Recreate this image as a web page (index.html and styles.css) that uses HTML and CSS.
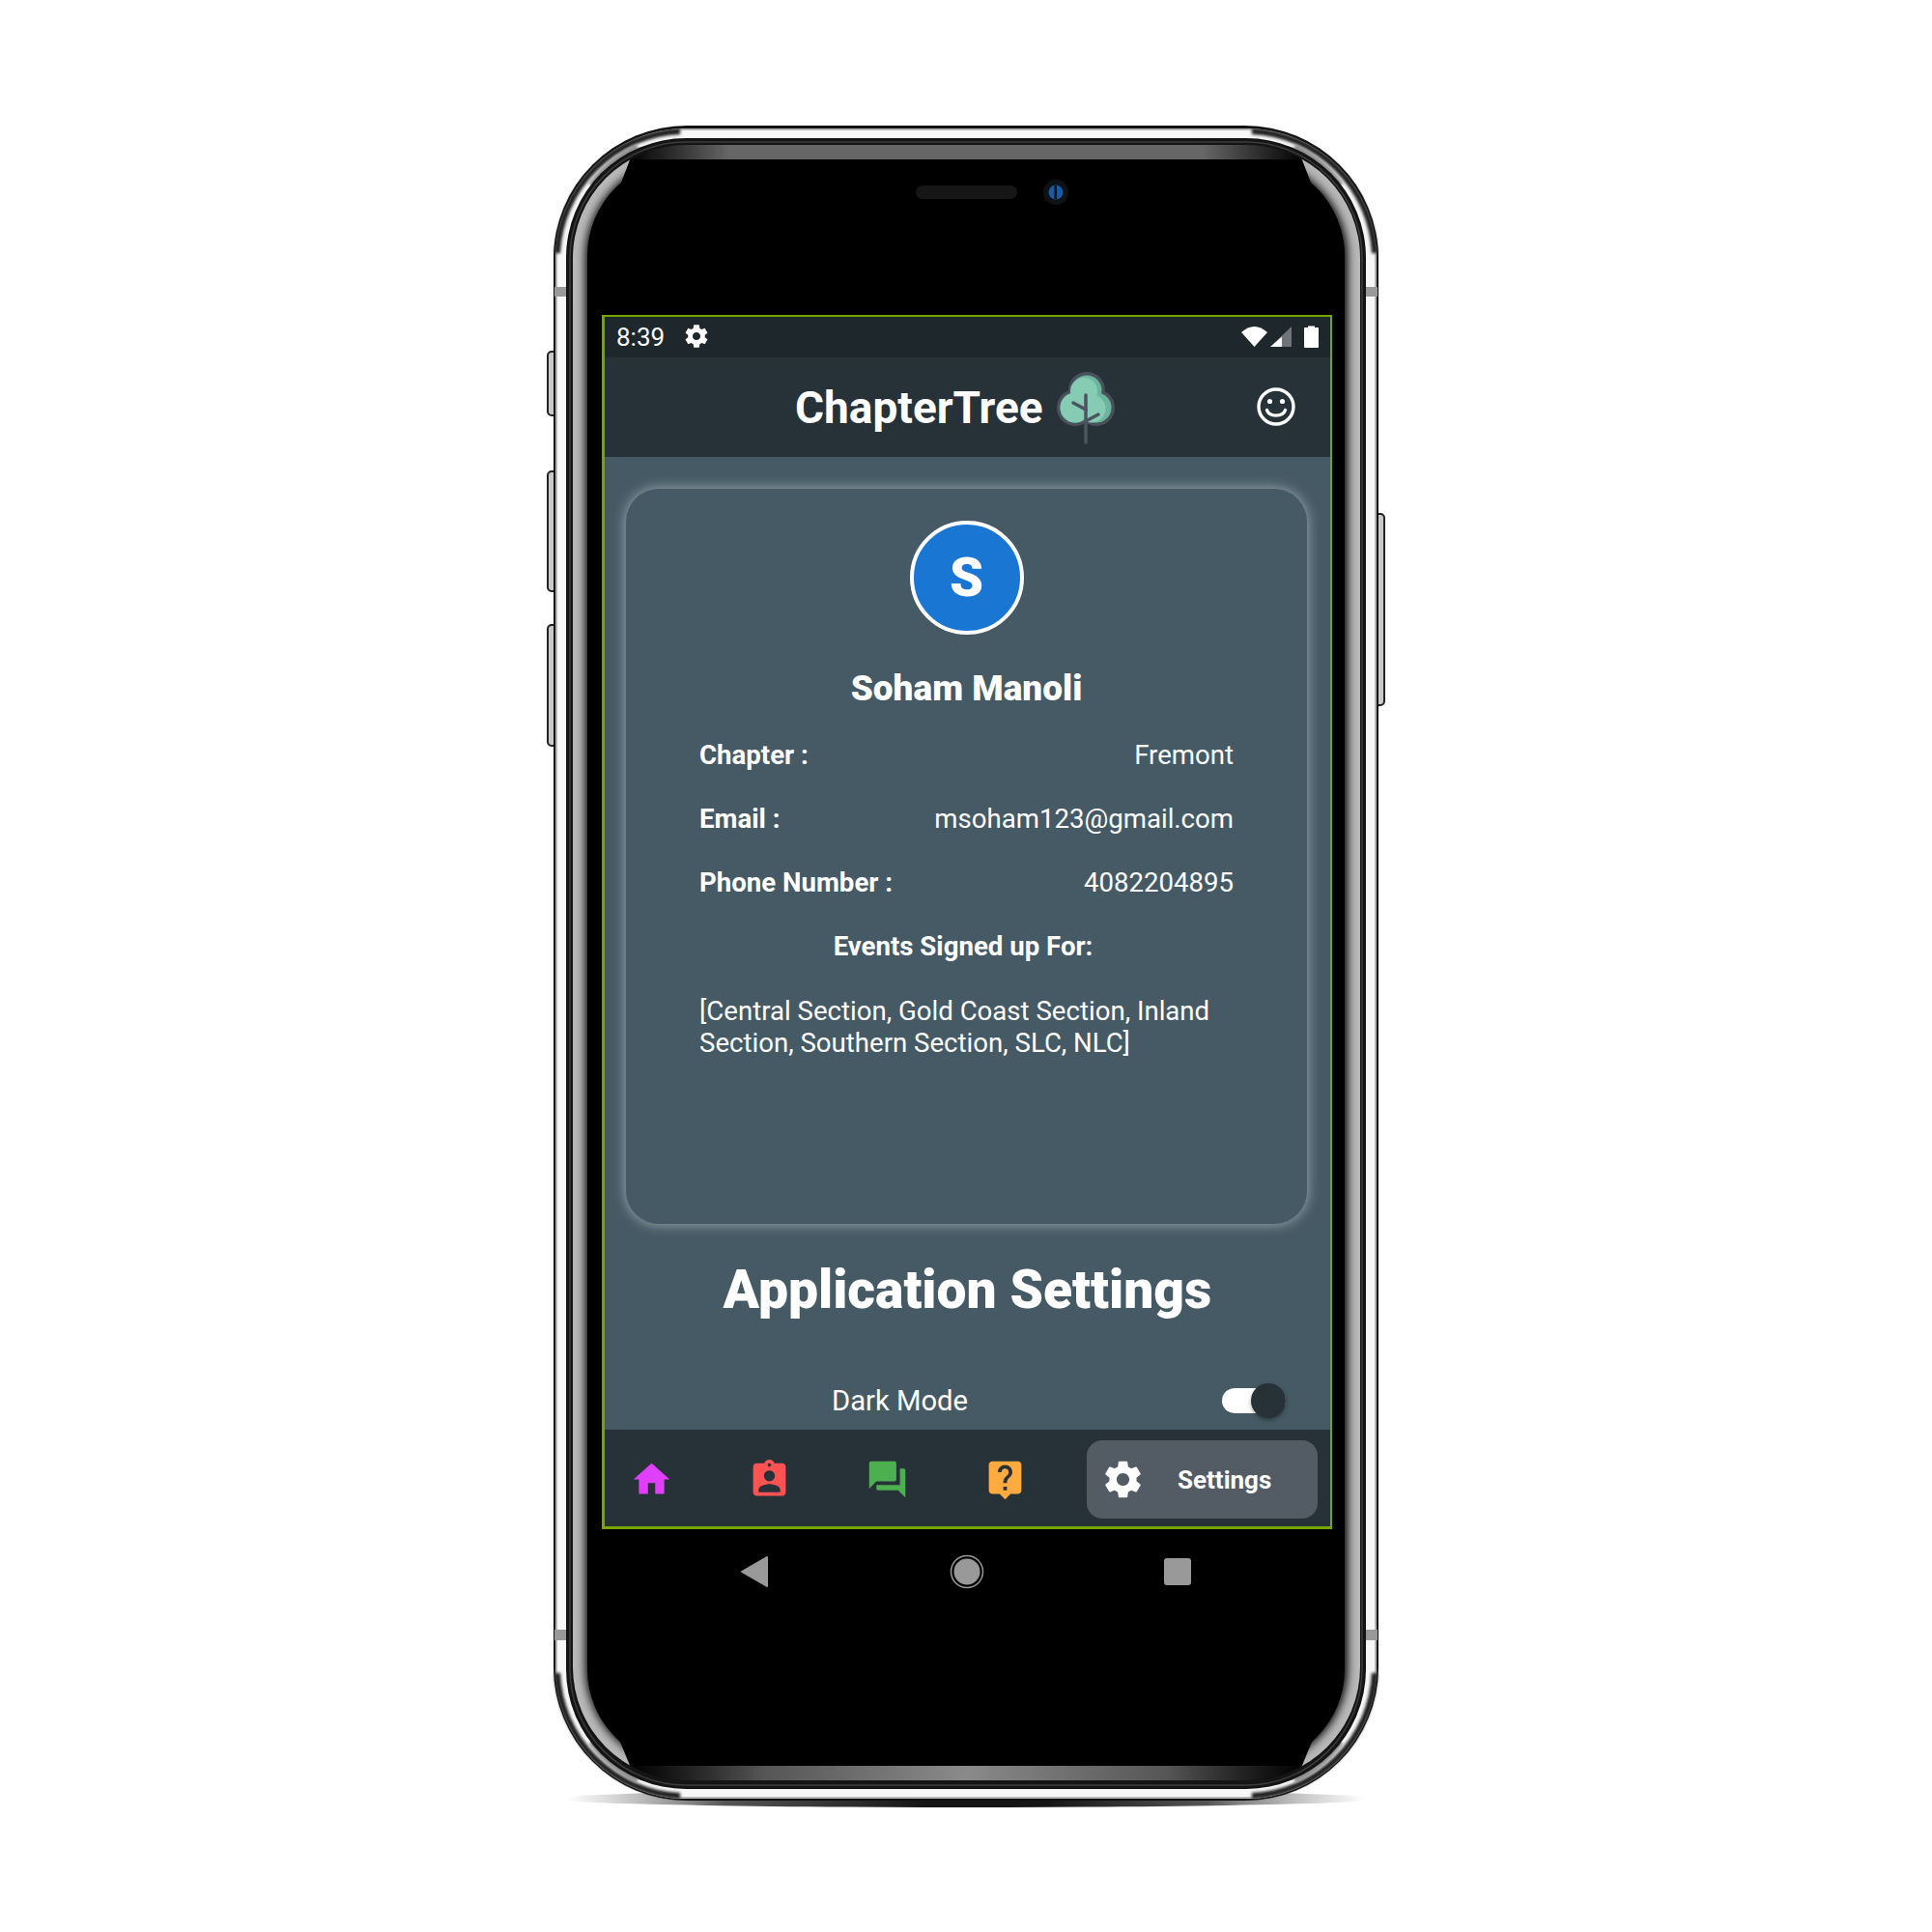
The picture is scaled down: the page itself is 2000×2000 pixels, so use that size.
FILE: index.html
```html
<!DOCTYPE html>
<html>
  <head>
    <meta charset="UTF-8" />
    <title>ChapterTree</title>
    <link rel="stylesheet" href="styles.css">
  </head>
  <body>
    <div class="stage">
      <!-- phone body, drawn in page coordinates -->
      <svg class="frame" viewBox="0 0 2000 2000" xmlns="http://www.w3.org/2000/svg">
        <defs>
          <linearGradient id="floor" x1="585" x2="1415" y1="0" y2="0" gradientUnits="userSpaceOnUse">
            <stop offset="0" stop-color="#888" stop-opacity="0"/>
            <stop offset="0.2" stop-color="#555"/>
            <stop offset="0.45" stop-color="#151515"/>
            <stop offset="0.6" stop-color="#151515"/>
            <stop offset="0.8" stop-color="#555"/>
            <stop offset="1" stop-color="#888" stop-opacity="0"/>
          </linearGradient>
          <linearGradient id="topband" x1="650" x2="1350" y1="0" y2="0" gradientUnits="userSpaceOnUse">
            <stop offset="0" stop-color="#666" stop-opacity="0"/>
            <stop offset="0.15" stop-color="#666"/>
            <stop offset="0.85" stop-color="#666"/>
            <stop offset="1" stop-color="#666" stop-opacity="0"/>
          </linearGradient>
          <linearGradient id="lowband" x1="650" x2="1350" y1="0" y2="0" gradientUnits="userSpaceOnUse">
            <stop offset="0" stop-color="#444" stop-opacity="0"/>
            <stop offset="0.2" stop-color="#555"/>
            <stop offset="0.5" stop-color="#8a8a8a"/>
            <stop offset="0.8" stop-color="#555"/>
            <stop offset="1" stop-color="#444" stop-opacity="0"/>
          </linearGradient>
          <clipPath id="sides">
            <polygon points="560,140 636,150 653,163 612,270 612,1730 653,1830 636,1843 560,1860"/>
            <polygon points="1440,140 1364,150 1347,163 1388,270 1388,1730 1347,1830 1364,1843 1440,1860"/>
          </clipPath>
          <clipPath id="glass">
            <rect x="593" y="150" width="815" height="1693" rx="117"/>
          </clipPath>
          <filter id="soft" x="-5%" y="-5%" width="110%" height="110%"><feGaussianBlur stdDeviation="5"/></filter>
          <filter id="soft2" x="-20%" y="-20%" width="140%" height="140%"><feGaussianBlur stdDeviation="1.5"/></filter>
        </defs>

        <ellipse cx="1000" cy="1862" rx="425" ry="9" fill="url(#floor)"/>

        <!-- side keys -->
        <g fill="#c9c9c9" stroke="#222" stroke-width="2">
          <rect x="567" y="364" width="10" height="66" rx="4"/>
          <rect x="567" y="488" width="10" height="124" rx="4"/>
          <rect x="567" y="647" width="10" height="125" rx="4"/>
          <rect x="1423" y="532" width="10" height="198" rx="4"/>
        </g>

        <rect x="573" y="130" width="854" height="1734" rx="138" fill="#111"/>
        <rect x="575" y="133" width="850" height="1729" rx="135" fill="#f7f7f7"/>
        <rect x="576" y="134" width="848" height="1727" rx="134" fill="none" stroke="#b5b5b5" stroke-width="2"/>

        <!-- steel darkens round the corners -->
        <g fill="none" stroke="#1c1c1c" stroke-width="6" filter="url(#soft2)">
          <path d="M577 262 A133 133 0 0 1 704 136"/>
          <path d="M1296 136 A133 133 0 0 1 1423 262"/>
          <path d="M577 1732 A133 133 0 0 0 704 1859"/>
          <path d="M1296 1859 A133 133 0 0 0 1423 1732"/>
        </g>
        <g fill="none" stroke="#8c8c8c" stroke-width="6" filter="url(#soft2)">
          <path d="M612 192 A124 124 0 0 1 660 152"/>
          <path d="M1340 152 A124 124 0 0 1 1388 192"/>
          <path d="M612 1803 A124 124 0 0 0 660 1843"/>
          <path d="M1340 1843 A124 124 0 0 0 1388 1803"/>
        </g>

        <rect x="586" y="143" width="828" height="1709" rx="124" fill="#141414"/>
        <rect x="590" y="147" width="820" height="1701" rx="120" fill="none" stroke="#3c3c3c" stroke-width="1.5"/>
        <rect x="593" y="150" width="815" height="1693" rx="117" fill="#000"/>

        <g clip-path="url(#glass)">
          <rect x="593" y="150" width="815" height="15" fill="url(#topband)"/>
          <rect x="593" y="1828" width="815" height="15" fill="url(#lowband)"/>
          <g clip-path="url(#sides)">
            <rect x="593" y="150" width="815" height="1693" rx="117" fill="none" stroke="#b8b8b8" stroke-width="26" filter="url(#soft)"/>
          </g>
        </g>
        <rect x="608" y="165" width="784" height="1663" rx="100" fill="#000"/>

        <!-- antenna bands -->
        <g fill="#999">
          <rect x="574" y="297" width="12" height="10"/>
          <rect x="1414" y="297" width="12" height="10"/>
          <rect x="574" y="1687" width="12" height="11"/>
          <rect x="1414" y="1687" width="12" height="11"/>
        </g>

        <rect x="948" y="192" width="105" height="14" rx="7" fill="#161616"/>
        <circle cx="1093" cy="199" r="13" fill="#0f1215"/>
        <circle cx="1093" cy="199" r="7.5" fill="#1a5aa0"/>
        <rect x="1091.5" y="192" width="2.5" height="14" fill="#06121f"/>

        <!-- android keys -->
        <path d="M794 1612 L794 1642 L768 1627 Z" fill="#999" stroke="#999" stroke-width="2" stroke-linejoin="round"/>
        <circle cx="1001" cy="1627" r="16.5" fill="none" stroke="#999" stroke-width="1.5"/>
        <circle cx="1001" cy="1627" r="13.5" fill="#999"/>
        <rect x="1205" y="1613" width="28" height="28" rx="3" fill="#999"/>
      </svg>

      <div class="screen">
        <div class="statusbar">
          <span class="clock">8:39</span>
          <svg class="status-gear" viewBox="0 0 24 24"><path fill="#fff" d="M19.43 12.98c.04-.32.07-.64.07-.98s-.03-.66-.07-.98l2.11-1.65c.19-.15.24-.42.12-.64l-2-3.46c-.12-.22-.39-.3-.61-.22l-2.49 1c-.52-.4-1.08-.73-1.69-.98l-.38-2.65C14.46 2.18 14.25 2 14 2h-4c-.25 0-.46.18-.49.42l-.38 2.65c-.61.25-1.17.59-1.69.98l-2.49-1c-.23-.09-.49 0-.61.22l-2 3.46c-.13.22-.07.49.12.64l2.11 1.65c-.04.32-.07.65-.07.98s.03.66.07.98l-2.11 1.65c-.19.15-.24.42-.12.64l2 3.46c.12.22.39.3.61.22l2.49-1c.52.4 1.08.73 1.69.98l.38 2.65c.03.24.24.42.49.42h4c.25 0 .46-.18.49-.42l.38-2.65c.61-.25 1.17-.59 1.69-.98l2.49 1c.23.09.49 0 .61-.22l2-3.46c.12-.22.07-.49-.12-.64l-2.11-1.65zM12 15.5c-1.93 0-3.5-1.57-3.5-3.5s1.57-3.5 3.5-3.5 3.5 1.57 3.5 3.5-1.57 3.5-3.5 3.5z"/></svg>
          <svg class="status-icons" viewBox="1284 334 82 26">
            <path fill="#fff" d="M1285 343 Q1298.5 331 1312 343 L1298.5 358 Z"/>
            <path fill="#6e7479" d="M1337 337 V358 H1315 Z"/>
            <path fill="#fff" d="M1327 347.5 V358 H1315 Z"/>
            <path fill="#fff" d="M1354 338 V336.5 H1361 V338 H1364 Q1365 338 1365 339 V358 Q1365 359 1364 359 H1351 Q1350 359 1350 358 V339 Q1350 338 1351 338 Z"/>
          </svg>
        </div>

        <div class="appbar">
          <span class="brand">ChapterTree</span>
          <svg class="tree" viewBox="1090 382 66 82">
            <g fill="#4a505c">
              <circle cx="1124" cy="405" r="19"/>
              <circle cx="1134" cy="423" r="19"/>
              <circle cx="1112" cy="423" r="19"/>
            </g>
            <g fill="#6cb49c">
              <circle cx="1124" cy="405" r="15.5"/>
              <circle cx="1134" cy="423" r="15.5"/>
              <circle cx="1112" cy="423" r="15.5"/>
            </g>
            <g fill="#86ccb5">
              <circle cx="1121" cy="406" r="14"/>
              <circle cx="1129" cy="424" r="14.5"/>
              <circle cx="1112" cy="423" r="15.5"/>
            </g>
            <g fill="none" stroke="#4b5560" stroke-width="3.5" stroke-linecap="round">
              <path d="M1123 410 V459"/>
              <path d="M1110 418 L1123 425"/>
              <path d="M1136 430 L1123 437"/>
            </g>
          </svg>
          <svg class="smile" viewBox="0 0 44 44" fill="none" stroke="#fff" stroke-width="3.4">
            <circle cx="22" cy="22" r="18"/>
            <path d="M12.5 25.5 C15 33 29 33 31.5 25.5" stroke-linecap="round"/>
            <circle cx="15.5" cy="16.5" r="2.6" fill="#fff" stroke="none"/>
            <circle cx="28.5" cy="16.5" r="2.6" fill="#fff" stroke="none"/>
          </svg>
        </div>

        <div class="content">
          <div class="card">
            <div class="avatar">S</div>
            <div class="name">Soham Manoli</div>
            <div class="row"><span class="label">Chapter :</span><span>Fremont</span></div>
            <div class="row"><span class="label">Email :</span><span>msoham123@gmail.com</span></div>
            <div class="row"><span class="label">Phone Number :</span><span>4082204895</span></div>
            <div class="row row-center"><span class="label">Events Signed up For:</span></div>
            <div class="events">[Central Section, Gold Coast Section, Inland Section, Southern Section, SLC, NLC]</div>
          </div>
          <h1 class="section-title">Application Settings</h1>
          <div class="setting">
            <span>Dark Mode</span>
            <div class="toggle"><div class="thumb"></div></div>
          </div>
        </div>

        <div class="tabbar">
          <div class="tab-group">
            <svg class="tab-icon" viewBox="0 0 24 24"><path fill="#e040fb" d="M10 20v-6h4v6h5v-8h3L12 3 2 12h3v8z"/></svg>
            <svg class="tab-icon" viewBox="0 0 24 24"><path fill="#ff5252" d="M19 3h-4.18C14.4 1.84 13.3 1 12 1c-1.3 0-2.4.84-2.82 2H5c-1.1 0-2 .9-2 2v14c0 1.1.9 2 2 2h14c1.1 0 2-.9 2-2V5c0-1.1-.9-2-2-2zm-7 0c.55 0 1 .45 1 1s-.45 1-1 1-1-.45-1-1 .45-1 1-1zm0 4c1.66 0 3 1.34 3 3s-1.34 3-3 3-3-1.34-3-3 1.34-3 3-3zm6 12H6v-1.4c0-2 4-3.1 6-3.1s6 1.1 6 3.1V19z"/></svg>
            <svg class="tab-icon" viewBox="0 0 24 24"><path fill="#4caf50" d="M21 6h-2v9H6v2c0 .55.45 1 1 1h11l4 4V7c0-.55-.45-1-1-1zm-4 6V3c0-.55-.45-1-1-1H3c-.55 0-1 .45-1 1v14l4-4h10c.55 0 1-.45 1-1z"/></svg>
            <svg class="tab-icon" viewBox="0 0 24 24"><path fill="#ffab40" d="M19 2H5c-1.11 0-2 .9-2 2v14c0 1.1.89 2 2 2h4l3 3 3-3h4c1.1 0 2-.9 2-2V4c0-1.1-.9-2-2-2zm-6 16h-2v-2h2v2zm2.07-7.75l-.9.92C13.45 11.9 13 12.5 13 14h-2v-.5c0-1.1.45-2.1 1.17-2.83l1.24-1.26c.37-.36.59-.86.59-1.41 0-1.1-.9-2-2-2s-2 .9-2 2H8c0-2.21 1.79-4 4-4s4 1.79 4 4c0 .88-.36 1.68-.93 2.25z"/></svg>
          </div>
          <div class="tab-active">
            <svg class="tab-icon" viewBox="0 0 24 24"><path fill="#fff" d="M19.43 12.98c.04-.32.07-.64.07-.98s-.03-.66-.07-.98l2.11-1.65c.19-.15.24-.42.12-.64l-2-3.46c-.12-.22-.39-.3-.61-.22l-2.49 1c-.52-.4-1.08-.73-1.69-.98l-.38-2.65C14.46 2.18 14.25 2 14 2h-4c-.25 0-.46.18-.49.42l-.38 2.65c-.61.25-1.17.59-1.69.98l-2.49-1c-.23-.09-.49 0-.61.22l-2 3.46c-.13.22-.07.49.12.64l2.11 1.65c-.04.32-.07.65-.07.98s.03.66.07.98l-2.11 1.65c-.19.15-.24.42-.12.64l2 3.46c.12.22.39.3.61.22l2.49-1c.52.4 1.08.73 1.69.98l.38 2.65c.03.24.24.42.49.42h4c.25 0 .46-.18.49-.42l.38-2.65c.61-.25 1.17-.59 1.69-.98l2.49 1c.23.09.49 0 .61-.22l2-3.46c.12-.22.07-.49-.12-.64l-2.11-1.65zM12 15.5c-1.93 0-3.5-1.57-3.5-3.5s1.57-3.5 3.5-3.5 3.5 1.57 3.5 3.5-1.57 3.5-3.5 3.5z"/></svg>
            <span>Settings</span>
          </div>
        </div>
      </div>
    </div>
  </body>
</html>
```

FILE: styles.css
```css
body { margin: 0; background: #fff; font-family: "Roboto", sans-serif; color: #fff; }
svg { display: block; }

.stage {
    position: relative;
    width: 2000px;
    height: 2000px;
    box-sizing: border-box;
    padding: 326px 0 0 623px;
}
.frame { position: absolute; top: 0; left: 0; width: 2000px; height: 2000px; }

.screen {
    position: relative;
    width: 756px;
    height: 1257px;
    box-sizing: border-box;
    border: solid #76a500;
    border-width: 2px 2px 3px 3px;
    display: flex;
    flex-direction: column;
    overflow: hidden;
}

/* status bar */
.statusbar {
    height: 42px;
    flex: none;
    background: #1e272c;
    display: flex;
    align-items: center;
    padding: 0 11px 2px 12px;
    box-sizing: border-box;
    font-size: 26px;
}
.clock { margin-right: 19px; padding-top: 2px; }
.status-gear { width: 28px; height: 28px; }
.status-icons { width: 82px; height: 26px; margin-left: auto; }

/* app bar */
.appbar {
    height: 103px;
    flex: none;
    background: #263238;
    display: flex;
    align-items: center;
    padding-left: 197px;
}
.brand { font-size: 46px; font-weight: 700; }
.tree { width: 66px; height: 82px; margin-left: 11px; }
.smile { width: 44px; height: 44px; margin: 0 34px 2px auto; }

.content {
    flex: 1;
    min-height: 0;
    background: #455a64;
    overflow: hidden;
}
.card {
    height: 761px;
    box-sizing: border-box;
    margin: 33px 24px 0 22px;
    padding: 33px 76px 0;
    border-radius: 34px;
    background: #455a64;
    box-shadow: 0 0 14px rgba(255, 255, 255, 0.5);
    font-size: 27.6px;
    display: flex;
    flex-direction: column;
}
.avatar {
    width: 118px;
    height: 118px;
    box-sizing: border-box;
    flex: none;
    align-self: center;
    border: 4px solid #fff;
    border-radius: 50%;
    background: #1976d2;
    display: flex;
    align-items: center;
    justify-content: center;
    font-size: 56px;
    font-weight: 900;
}
.name {
    margin: 35px 0 14px;
    line-height: 42px;
    text-align: center;
    font-size: 37px;
    font-weight: 900;
}
.row {
    height: 66px;
    flex: none;
    display: flex;
    align-items: center;
    justify-content: space-between;
}
.row-center { justify-content: center; padding-right: 7px; }
.label { font-weight: 700; }
.events { margin-top: 18px; line-height: 33px; }

.section-title {
    margin: 34px 0 0;
    line-height: 68px;
    text-align: center;
    font-size: 55.2px;
    font-weight: 900;
}
.setting {
    height: 60px;
    margin-top: 51px;
    padding: 0 46px 0 235px;
    display: flex;
    align-items: center;
    justify-content: space-between;
    font-size: 29.2px;
}
.toggle {
    width: 66px;
    height: 26px;
    border-radius: 13px;
    background: #fff;
    display: flex;
    align-items: center;
    justify-content: flex-end;
}
.thumb {
    width: 36px;
    height: 36px;
    border-radius: 50%;
    background: #263238;
    box-shadow: 0 2px 4px rgba(0, 0, 0, 0.35);
}

/* bottom tabs */
.tabbar {
    height: 100px;
    flex: none;
    box-sizing: border-box;
    background: #263238;
    display: flex;
    align-items: center;
    justify-content: space-between;
    padding: 3px 13px 0 26px;
}
.tab-group { display: flex; gap: 77px; }
.tab-icon { width: 45px; height: 45px; flex: none; }
.tab-active {
    width: 239px;
    height: 81px;
    box-sizing: border-box;
    padding-left: 15px;
    border-radius: 16px;
    background: #535c64;
    display: flex;
    align-items: center;
    gap: 34px;
    font-size: 26px;
    font-weight: 700;
}
```
